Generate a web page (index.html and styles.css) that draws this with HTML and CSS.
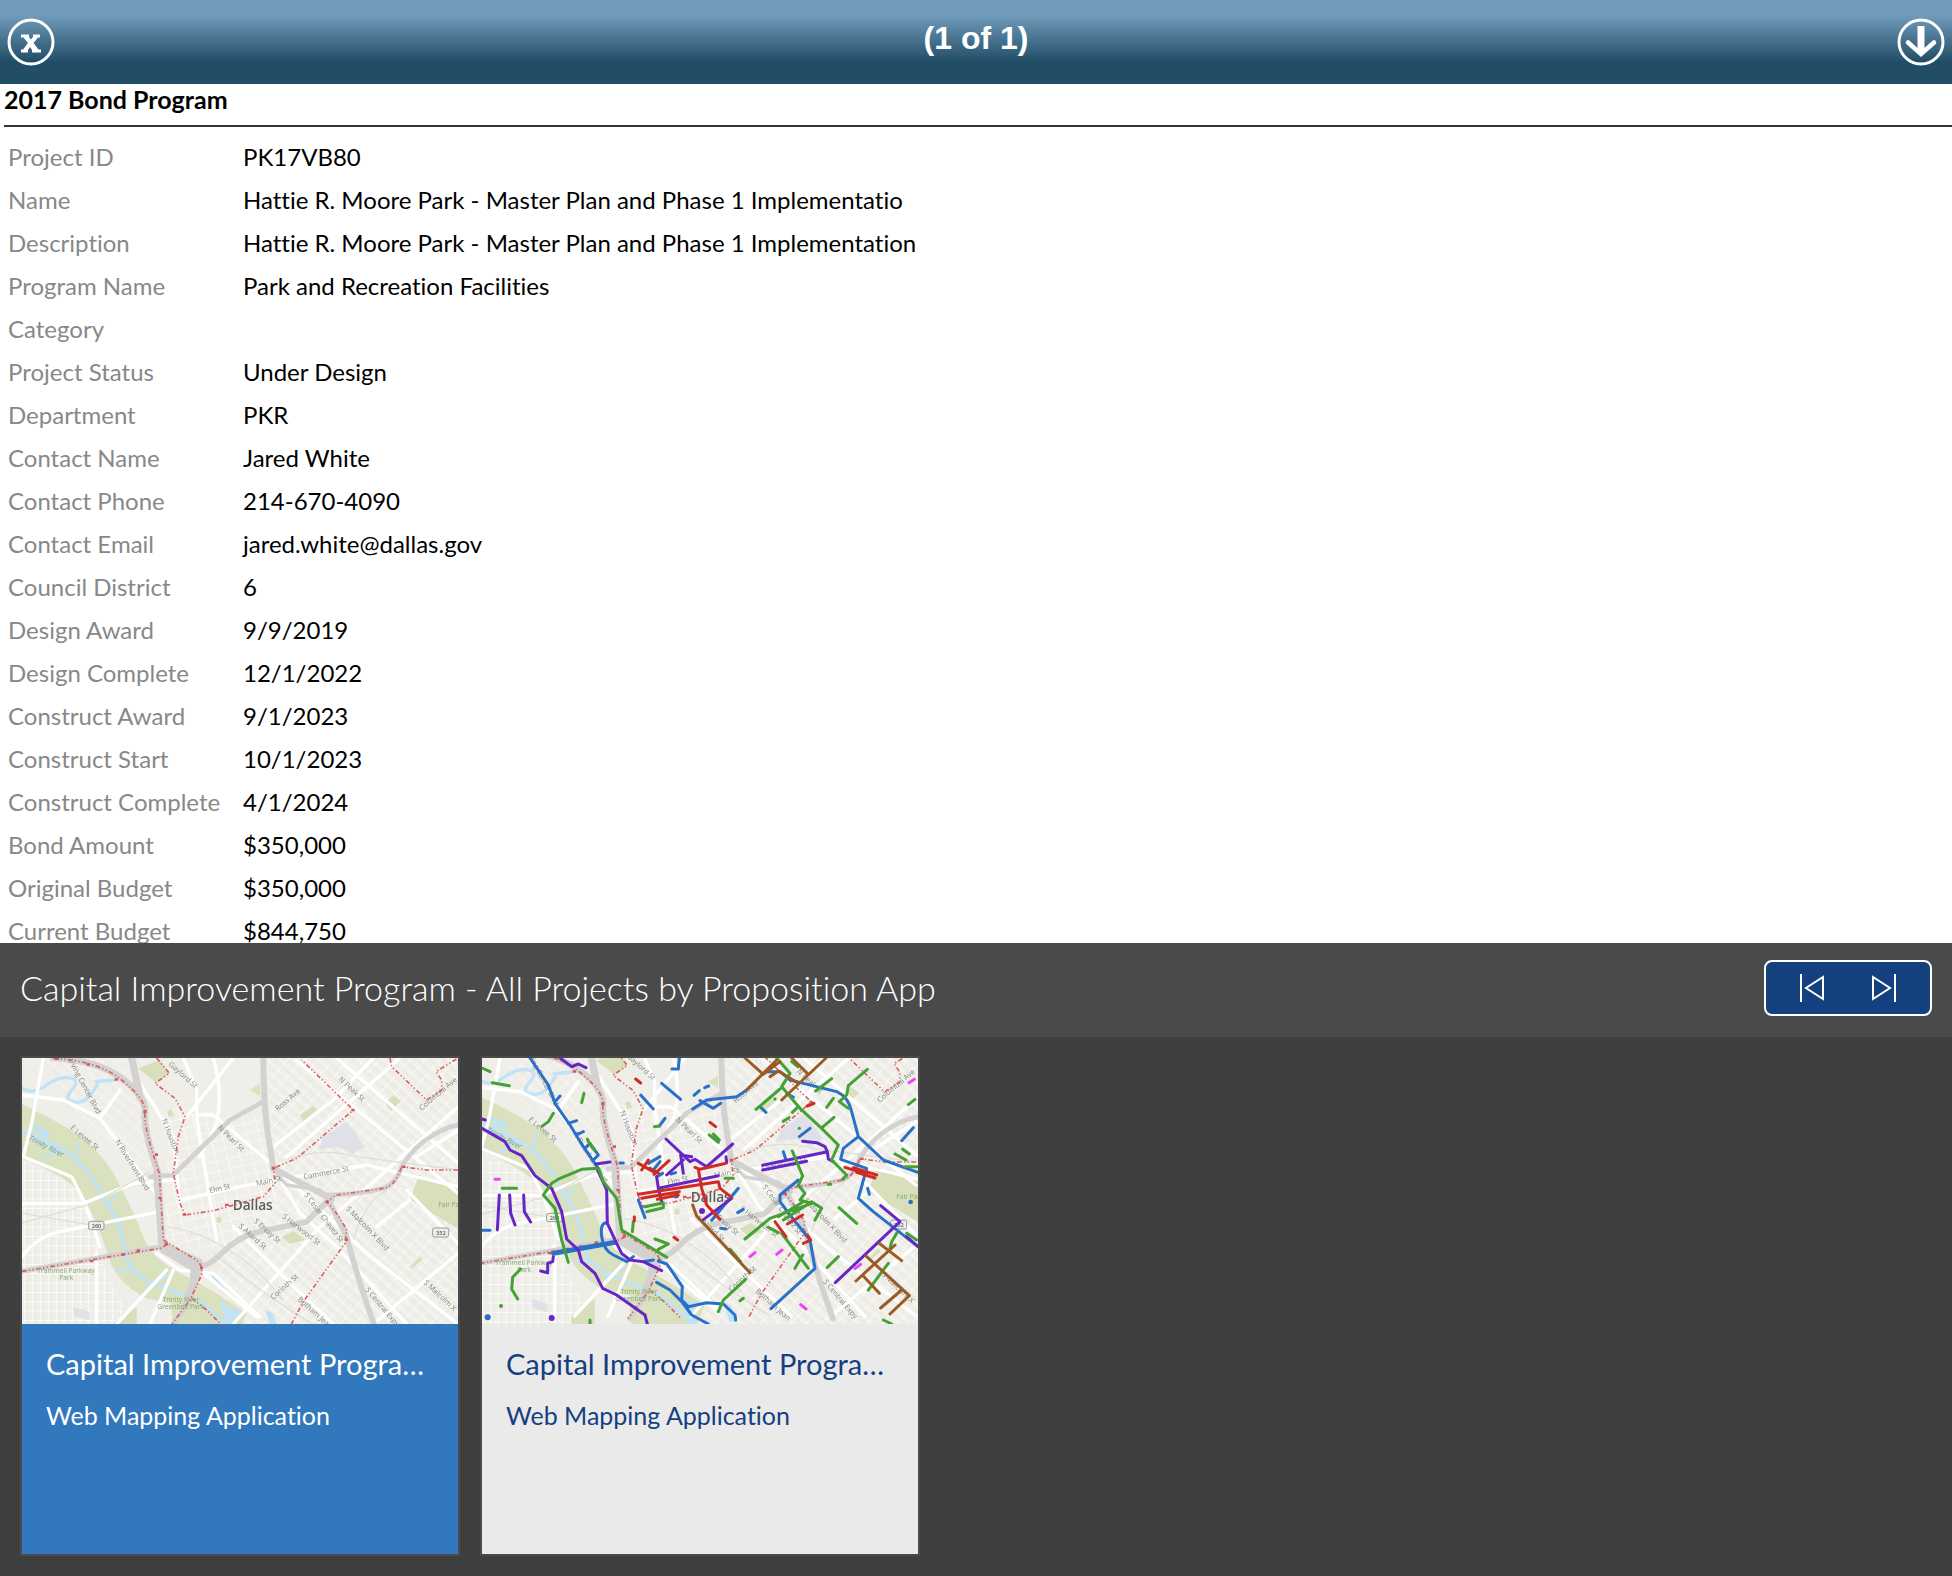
FILE: index.html
```html
<!DOCTYPE html>
<html lang="en">
<head>
<meta charset="utf-8">
<meta name="viewport" content="width=device-width, initial-scale=1">
<title>Capital Improvement Program</title>
<link rel="stylesheet" href="styles.css">
</head>
<body>
<svg class="defs" aria-hidden="true">
  <defs>
    <filter id="soft" x="0" y="0" width="1" height="1"><feGaussianBlur stdDeviation="2"/></filter>
    <pattern id="gridDiag" width="34" height="26" patternUnits="userSpaceOnUse" patternTransform="rotate(42)"><path d="M0 0H34M0 0V26" stroke="#fbfbf8" stroke-width="5" fill="none"/><path d="M0 13H34" stroke="#e6e5df" stroke-width="2"/></pattern>
    <pattern id="gridSquare" width="24" height="28" patternUnits="userSpaceOnUse"><path d="M0 0H24M0 0V28" stroke="#fbfbf8" stroke-width="5" fill="none"/><path d="M12 0V28" stroke="#e9e8e2" stroke-width="2"/></pattern>
    <pattern id="gridTown" width="36" height="30" patternUnits="userSpaceOnUse" patternTransform="rotate(-14)"><path d="M0 0H36M0 0V30" stroke="#fcfcfa" stroke-width="5" fill="none"/></pattern>
    <g id="basemap">
      <rect x="0" y="0" width="1450" height="920" fill="#efeee8"/>
      <path d="M800 40H1450V920H700L640 640L820 480Z" fill="url(#gridDiag)"/>
      <path d="M60 360L230 440L320 700L420 900H60Z" fill="url(#gridSquare)"/>
      <path d="M500 200L800 230L830 500L700 640L500 600Z" fill="url(#gridTown)"/>
      <path d="M130 40L400 60L460 400L340 330L200 220Z" fill="url(#gridDiag)" opacity=".6"/>
      <!-- parks -->
      <path d="M40 180L150 235Q280 300 340 400Q390 490 430 590Q450 650 540 700Q640 750 740 820L700 920H520L515 790L440 775Q350 730 325 650Q300 560 255 480Q215 410 40 345Z" fill="#dae1bf"/>
      <path d="M415 85L480 60L508 100L470 130Z" fill="#d8dfba"/>
      <path d="M750 150L780 130V168Z" fill="#dbe2c0"/>
      <path d="M900 225L940 198L950 212L912 244Z" fill="#d8dfba"/>
      <path d="M1155 188L1180 165L1202 184L1172 212Z" fill="#d8dfba"/>
      <path d="M1258 404L1310 430L1450 470V620L1370 565L1230 478Z" fill="#d8dfba"/>
      <path d="M845 590L880 572L915 600L870 612ZM340 852L410 800V880H340ZM1230 680L1262 648L1268 658L1238 684ZM500 212L515 208L522 228L506 230ZM650 530H664V548H650Z" fill="#d8dfba"/>
      <path d="M970 290L1040 245L1095 320L1060 342L1010 320L955 330ZM220 800L268 815V840L222 828Z" fill="#e0e0e8"/>
      <!-- water -->
      <g fill="none" stroke="#c1e3f7" stroke-linecap="round" stroke-linejoin="round">
        <path d="M66 145Q100 165 140 135T215 115Q240 120 215 150T215 185Q250 195 275 160T290 125T345 120" stroke-width="10"/>
        <path d="M70 275Q170 310 225 355Q290 420 320 490Q370 560 375 640Q390 700 460 730T600 785L700 870" stroke-width="10"/>
        <path d="M225 355L235 310M170 325L125 362M320 490L350 470M440 740L500 708M350 690H390M640 710L680 755" stroke-width="7"/>
      </g>
      <path d="M100 250L125 265L150 275L140 292L105 275ZM665 775L685 805L730 812L700 835L720 880H700L665 810ZM795 810L820 820L835 870H815Z" fill="#c1e3f7"/>
      <!-- secondary streets -->
      <g fill="none" stroke="#fff" stroke-width="10" stroke-linecap="round" stroke-linejoin="round">
        <path d="M130 54L95 250L70 350L215 410L255 490L300 620M66 165L190 180L300 235L400 370L480 480M66 490H250L400 430L520 420"/>
        <path d="M66 650Q110 590 180 575L480 515M290 640V852M300 235L360 150M550 54L590 150V230L620 420L650 600"/>
        <path d="M420 130L520 290L540 500M590 225H640L830 385L1100 640L1374 852M700 54L560 230M640 54Q670 160 650 250L600 350"/>
        <path d="M540 480L720 440L830 420L1100 375L1374 440M890 60L1374 460M820 320L1000 180L1120 54M830 400L900 520L1010 620L1220 852"/>
        <path d="M1010 54L1374 370M860 350L1200 54M700 560L860 720L1000 852M1374 200L1150 400L960 560L700 852M1220 450L1374 610M1230 480L1130 560"/>
        <path d="M470 640L540 690L640 700L780 830M500 690L350 852M520 690L450 852M610 700L720 790L770 830M1374 640L1120 852M1250 350L1374 270"/>
      </g>
      <g fill="none" stroke="#dfded9" stroke-width="4"><path d="M66 548L280 490L450 395M640 640Q760 740 900 830L940 852M860 360Q960 320 1070 350L1374 390M70 520L300 560M1160 450Q1090 490 1060 600M500 560Q700 590 850 780"/></g>
      <!-- highways -->
      <g fill="none" stroke="#d3d2d1" stroke-linecap="round" stroke-linejoin="round">
        <path d="M160 54Q290 60 365 115T435 220T475 400L485 610" stroke-width="20"/>
        <path d="M395 54L420 170M470 400L485 600" stroke-width="22"/>
        <path d="M790 40Q790 200 805 290L820 385" stroke-width="18"/>
        <path d="M450 410L520 405L690 240L790 185" stroke-width="14"/>
        <path d="M820 385L975 465Q1080 465 1150 445Q1190 430 1205 380Q1240 320 1300 285T1400 255" stroke-width="14"/>
        <path d="M820 385L980 470L1040 590Q1080 740 1125 860" stroke-width="17"/>
        <path d="M985 480L920 545L830 565Q730 575 670 635T590 670" stroke-width="17"/>
        <path d="M66 694L480 622L580 665L575 770L515 860" stroke-width="15"/>
        <path d="M485 600L510 635L600 675L560 790" stroke-width="24"/>
        <path d="M830 400L860 435L960 450L1000 480L940 520" stroke-width="10"/>
      </g>
      <path d="M480 600L610 660L570 690L480 635Z" fill="#d3d2d1"/>
      <!-- district boundary -->
      <g fill="none" stroke="#d96364" stroke-width="5" stroke-dasharray="14 7 4 7 4 7">
        <path d="M160 56Q290 60 365 120T435 220T478 400L490 600L580 655Q610 670 605 705L570 780L510 860"/>
        <path d="M66 694L480 625L500 615M470 54L508 100L465 130L525 175L555 230L535 290L520 400L540 490L555 525L640 512L790 470L825 430L820 385L890 355L1060 210L905 60"/>
        <path d="M1170 54L1175 80L1280 180L1325 150V120L1308 95L1374 54M1374 390H1280L1205 380Q1185 440 1150 445L1010 465L980 485Q1020 530 1040 570L1035 610L910 785L870 860M575 775L620 810L670 860"/>
      </g>
      <g fill="#d05a5c"><path d="M165 53h12v7h-12zM260 70h10v7h-10zM344 115h10v7h-10zM430 211h10v8h-10zM465 340h9v8h-9zM475 470h9v8h-9zM494 608h10v8h-10zM364 640h10v7h-10zM270 660h10v7h-10zM410 628h10v7h-10zM815 380h11v9h-11zM1205 377h12v7h-12zM1054 206h10v8h-10zM675 491h11v7h-11zM548 520h10v7h-10zM976 482h10v8h-10zM1035 595h9v8h-9zM600 680h9v8h-9z"/></g>
      <!-- labels -->
      <g class="map-label">
        <text transform="translate(205 62) rotate(62)">Irving Center Blvd</text>
        <text transform="translate(505 75) rotate(42)">Gaylord St</text>
        <text transform="translate(210 265) rotate(40)">E Levee St</text>
        <text transform="translate(345 305) rotate(58)">N Riverfront Blvd</text>
        <text transform="translate(485 240) rotate(68)">N Houston</text>
        <text transform="translate(652 265) rotate(44)">N Pearl St</text>
        <text transform="translate(833 214) rotate(-40)">Ross Ave</text>
        <text transform="translate(1015 120) rotate(43)">N Peak St</text>
        <text transform="translate(1265 212) rotate(-40)">Columbia Ave</text>
        <text transform="translate(630 460) rotate(-14)">Elm St</text>
        <text transform="translate(770 438) rotate(-12)">Main St</text>
        <text transform="translate(912 418) rotate(-11)">Commerce St</text>
        <text transform="translate(912 465) rotate(53)">S Cesar Chavez St</text>
        <text transform="translate(1037 508) rotate(46)">S Malcolm X Blvd</text>
        <text transform="translate(845 532) rotate(38)">S Harwood St</text>
        <text transform="translate(760 545) rotate(42)">S Ervay St</text>
        <text transform="translate(715 560) rotate(42)">S Akard St</text>
        <text transform="translate(820 780) rotate(-42)">Corinth St</text>
        <text transform="translate(892 780) rotate(42)">Botham Jean</text>
        <text transform="translate(1095 750) rotate(50)">S Central Expy</text>
        <text transform="translate(1270 730) rotate(43)">S Malcolm X</text>
        <text class="map-river" transform="translate(85 298) rotate(28)">Trinity River</text>
        <text class="map-park" x="112" y="699">Trammell Parkway</text>
        <text class="map-park" x="178" y="719">Park</text>
        <text class="map-park" x="488" y="787">Trinity River</text>
        <text class="map-park" x="472" y="808">Greenbelt Park</text>
        <text class="map-park" x="1315" y="502">Fair Park</text>
      </g>
      <g fill="#eee" stroke="#999" stroke-width="3"><rect x="266" y="544" width="46" height="25" rx="5"/><rect x="1298" y="564" width="48" height="27" rx="5"/></g>
      <text class="map-shield" x="275" y="564">260</text><text class="map-shield" x="1308" y="585">352</text>
      <text class="map-city" x="698" y="510">Dallas</text>
    </g>
  </defs>
</svg>

<header class="popup-bar">
  <button class="icon-button" type="button" aria-label="Close">
    <svg viewBox="0 0 48 48" width="48" height="48"><circle cx="24" cy="24" r="22" fill="none" stroke="#fff" stroke-width="3"/><path d="M14 16.500h8v2.500l2 2.500 2-2.500v-2.500h7v3h-2l-4.500 5.500 5 6.500h2.500v3h-9V32l-2-3-2 3v2.500H14v-3h2l5-6.500-4.500-5.500H14Z" fill="#fff"/></svg>
  </button>
  <h1 class="popup-count">(1 of 1)</h1>
  <button class="icon-button" type="button" aria-label="Next">
    <svg viewBox="0 0 48 48" width="48" height="48"><circle cx="24" cy="24" r="22" fill="none" stroke="#fff" stroke-width="3"/><path d="M24 8V33" stroke="#fff" stroke-width="7" fill="none"/><path d="M11 24.500L24 36 37 24.500" fill="none" stroke="#fff" stroke-width="4.500" stroke-linecap="round"/></svg>
  </button>
</header>

<main class="details">
  <h2 class="details-title">2017 Bond Program</h2>
  <table class="attributes">
    <tbody>
      <tr><th scope="row">Project ID</th><td>PK17VB80</td></tr>
      <tr><th scope="row">Name</th><td>Hattie R. Moore Park - Master Plan and Phase 1 Implementatio</td></tr>
      <tr><th scope="row">Description</th><td>Hattie R. Moore Park - Master Plan and Phase 1 Implementation</td></tr>
      <tr><th scope="row">Program Name</th><td>Park and Recreation Facilities</td></tr>
      <tr><th scope="row">Category</th><td></td></tr>
      <tr><th scope="row">Project Status</th><td>Under Design</td></tr>
      <tr><th scope="row">Department</th><td>PKR</td></tr>
      <tr><th scope="row">Contact Name</th><td>Jared White</td></tr>
      <tr><th scope="row">Contact Phone</th><td>214-670-4090</td></tr>
      <tr><th scope="row">Contact Email</th><td>jared.white@dallas.gov</td></tr>
      <tr><th scope="row">Council District</th><td>6</td></tr>
      <tr><th scope="row">Design Award</th><td>9/9/2019</td></tr>
      <tr><th scope="row">Design Complete</th><td>12/1/2022</td></tr>
      <tr><th scope="row">Construct Award</th><td>9/1/2023</td></tr>
      <tr><th scope="row">Construct Start</th><td>10/1/2023</td></tr>
      <tr><th scope="row">Construct Complete</th><td>4/1/2024</td></tr>
      <tr><th scope="row">Bond Amount</th><td>$350,000</td></tr>
      <tr><th scope="row">Original Budget</th><td>$350,000</td></tr>
      <tr><th scope="row">Current Budget</th><td>$844,750</td></tr>
    </tbody>
  </table>
</main>

<section class="gallery">
  <div class="gallery-bar">
    <h2 class="gallery-title">Capital Improvement Program - All Projects by Proposition App</h2>
    <div class="pager">
      <button type="button" class="pager-button" aria-label="First"><svg viewBox="0 0 24 28" width="24" height="28"><path d="M1 0V28M23 3V25L6 14Z" fill="none" stroke="#fff" stroke-width="2"/></svg></button>
      <button type="button" class="pager-button" aria-label="Last"><svg viewBox="0 0 24 28" width="24" height="28"><path d="M23 0V28M1 3V25L18 14Z" fill="none" stroke="#fff" stroke-width="2"/></svg></button>
    </div>
  </div>
  <div class="cards">
    <a class="card card-active" href="#all">
      <svg class="card-map" viewBox="66 54 1308 798" role="img" aria-label="Map of Dallas"><use href="#basemap" filter="url(#soft)"/></svg>
      <span class="card-body"><span class="card-title">Capital Improvement Progra…</span><span class="card-type">Web Mapping Application</span></span>
    </a>
    <a class="card" href="#projects">
      <svg class="card-map" viewBox="36 54 1308 798" role="img" aria-label="Map of projects in Dallas">
        <g filter="url(#soft)">
          <use href="#basemap" x="-36" y="-24"/>
          <g class="routes">
            <g stroke="#2a6fc9">
              <path d="M180 54L235 135L255 190L300 255L340 320L385 385M235 135L240 150M255 185L270 168M295 250L320 242M318 285L340 275M345 325L360 310L385 345L370 360"/>
              <path d="M575 130L632 178M628 54L625 87H606M512 165L550 207M672 166L688 152M704 143L716 138M668 207L710 180L800 170L830 150M690 182L730 205L752 190M585 235L568 258"/>
              <path d="M890 95L930 95L960 120L1000 130L1100 155Q1135 170 1145 215L1165 290L1240 360L1344 397M1165 290L1120 325L1112 358L1190 385L1165 475L1210 515L1344 620"/>
              <path d="M950 160L970 172M870 200L888 217M1020 265L988 290M1330 263L1295 302M940 335L947 357M1193 445L1198 463M985 420L930 465V485L960 525L1020 600L1035 685L903 806"/>
              <path d="M36 571H60M408 548Q390 550 395 590T430 645L470 665L490 650M520 665L550 660M565 663L590 672L600 685L637 740L635 780L655 800L710 788L760 792L795 825L797 840M560 727L600 750L635 785L665 825L715 852"/>
              <path d="M505 480L525 533M535 370L570 350M560 410L578 400M603 402L617 398M450 369H460M805 445L725 541M820 508L803 518M752 565L768 567M550 390L570 365M615 470H622"/>
              <path d="M250 640L435 607" stroke-width="14"/>
            </g>
            <g stroke="#6527c6">
              <path d="M36 237L46 240M36 265L105 305L120 330L155 347L195 407L245 445L275 515L290 597L325 630L335 665L375 700L398 745L440 765L525 825L532 852"/>
              <path d="M270 54L305 80L325 72L348 83M378 372L420 366M382 388L410 450L412 550L440 610L455 640L480 660L520 665L575 692M250 650L248 665L233 670V698L212 693"/>
              <path d="M88 465L82 570M119 465L122 520L135 555M161 465L163 515L182 546M588 297L660 365L675 358L710 380L788 312M590 405L640 360M640 400L632 345L665 350M768 350L770 368M560 410L565 445L745 407M565 445L575 485"/>
              <path d="M878 376L1072 335L1065 320L1040 308L998 304M878 390L1010 364M1072 335L1075 357L1090 365M785 475L696 542M1232 497L1290 545L1096 728M1310 590L1344 620"/>
            </g>
            <g stroke="#45a135">
              <path d="M220 465L245 430L270 415L335 388L385 385L400 425L440 475L455 570L590 652M220 465L255 505L275 600L295 667M36 84L60 95M67 128L118 137M342 160L335 188M250 220L235 245L216 259M97 445H140M352 297L358 310L373 330"/>
              <path d="M152 687L128 712L125 747L143 777M490 545L487 575M555 597L595 612L565 628M525 500L580 488V503L530 515M718 285L745 307M730 282L748 300M765 415H790M553 260L568 258"/>
              <path d="M920 54L960 100L935 140L990 205L1055 265L1105 315L1085 360L1130 405L1118 418M930 147L858 208M1192 88L1135 137L1130 165L1108 185L1135 205M1085 116L1037 153M1090 175L1070 202M985 200L967 217M957 233L940 244M1092 232L1057 262M1335 178L1315 194M965 65L983 80"/>
              <path d="M967 333L998 408L985 435L1005 460L990 480L1025 490L900 535L825 597M925 530L1000 485M940 540L1025 485L1055 505L1035 540M895 562L925 578M935 580L1015 685M975 685L998 645M1107 503L1160 550M1105 650L1072 682M827 718L760 780L745 815M780 628L812 665M810 782L820 775M1255 670L1195 750M1298 328L1318 342M1275 342L1308 360M1305 380H1344M1280 580L1265 605L1260 625M1240 840L1265 852M1310 580L1340 600M1075 433H1082M360 840V852"/>
            </g>
            <g stroke="#9a5b24">
              <path d="M825 54L880 103M920 60L830 150M880 103L930 65M965 54L1015 103M1068 54L935 180M900 110L925 93L985 130"/>
              <path d="M668 495L680 528L840 698M1228 610L1295 662M1275 615L1158 723M1188 648L1318 767M1180 708L1228 760M1295 750L1232 804M1318 767L1260 822"/>
            </g>
            <g stroke="#cf2c27">
              <path d="M497 117L512 129M1012 198L1032 190M720 247L737 260M505 370L550 395M515 390L535 360M552 403L597 362M540 385L565 400M505 463L745 425L750 445L785 472M515 475L628 455M562 478L625 465M675 382L690 388L768 370M685 388L695 445L710 495L750 538M493 530V543M612 592L623 600"/>
              <path d="M915 545L948 590M998 525L952 552M1000 610L1022 600L1012 585M1125 382L1190 402M1150 383L1220 405M1160 397L1215 414"/>
            </g>
            <g stroke="#ee45ee"><path d="M75 418H88M840 650L855 638M920 643L936 630M1155 686L1172 673M992 794L1008 807M1317 128L1333 118"/></g>
            <g fill="#6527c6"><circle cx="696" cy="513" r="9"/><circle cx="245" cy="834" r="9"/></g>
            <g fill="#2a6fc9"><circle cx="53" cy="832" r="9"/><circle cx="1322" cy="486" r="7"/></g>
            <g fill="#45a135"><circle cx="93" cy="798" r="6"/><circle cx="988" cy="265" r="5"/><circle cx="915" cy="177" r="5"/></g>
          </g>
        </g>
      </svg>
      <span class="card-body"><span class="card-title">Capital Improvement Progra…</span><span class="card-type">Web Mapping Application</span></span>
    </a>
  </div>
</section>
</body>
</html>
```
FILE: styles.css
```css
* { box-sizing: border-box; }

body {
  margin: 0;
  height: 100vh;
  display: flex;
  flex-direction: column;
  background: #3e3e3e;
  color: #000;
  font-family: "Avenir Next", Lato, "Open Sans", sans-serif;
  font-size: 24px;
  font-variant-ligatures: none;
}

h1, h2 { margin: 0; }

button {
  padding: 0;
  border: 0;
  background: none;
  color: inherit;
  cursor: pointer;
}

svg { display: block; }

.defs { position: absolute; width: 0; height: 0; }

/* Popup header */
.popup-bar {
  flex: none;
  height: 84px;
  padding: 0 7px;
  display: flex;
  align-items: center;
  justify-content: space-between;
  background: linear-gradient(#6f9aba 16px, #214d67 62px);
  color: #fff;
}

.popup-count {
  padding-bottom: 8px;
  font-family: "Liberation Sans", Arial, sans-serif;
  font-size: 32px;
  line-height: 40px;
}

/* Attribute list */
.details {
  flex: 1;
  min-height: 0;
  overflow: auto;
  scrollbar-width: none;
  padding-left: 4px;
  background: #fff;
}

.details-title {
  height: 43px;
  border-bottom: 2px solid #333;
  font-size: 25px;
  line-height: 30px;
}

.attributes {
  margin-top: 8px;
  border-collapse: collapse;
  line-height: 29px;
}

.attributes th,
.attributes td {
  height: 43px;
  padding: 7px 4px;
  text-align: left;
  font-weight: 400;
}

.attributes th {
  width: 235px;
  color: #888;
}

/* Gallery */
.gallery { flex: none; color: #fff; }

.gallery-bar {
  height: 94px;
  padding: 0 20px 4px;
  display: flex;
  align-items: center;
  justify-content: space-between;
  background: #4a4a4a;
}

.gallery-title {
  font-size: 34px;
  font-weight: 300;
  line-height: 40px;
}

.pager {
  display: flex;
  padding: 0 10px;
  height: 56px;
  border: 2px solid #fff;
  border-radius: 8px;
  background: #15407f;
}

.pager-button {
  width: 72px;
  display: flex;
  align-items: center;
  justify-content: center;
}

.cards {
  display: flex;
  gap: 20px;
  padding: 19px 20px 20px;
}

.card {
  width: 440px;
  min-height: 500px;
  border: 2px solid #4a4a4a;
  background: #eaeaea;
  color: #15407f;
  text-decoration: none;
}

.card-active { background: #3178bd; color: #fff; }

.card-map { width: 100%; height: auto; }

.card-body {
  display: flex;
  flex-direction: column;
  gap: 18px;
  padding: 22px 24px 24px;
}

.card-title {
  overflow: hidden;
  white-space: nowrap;
  font-size: 29px;
  line-height: 36px;
}

.card-type {
  font-size: 25px;
  line-height: 30px;
}

/* Map drawing */
.map-label { font: 22px "Open Sans", sans-serif; fill: #858583; }
.map-river { fill: #5d9fc4; font-style: italic; }
.map-park { font-size: 20px; fill: #85a86c; }
.map-shield { font: bold 17px "Open Sans", sans-serif; fill: #777; }
.map-city { font: 600 41px "Open Sans", sans-serif; fill: #5c5c5a; }

.routes { fill: none; stroke-width: 9; stroke-linecap: round; stroke-linejoin: round; }
```
